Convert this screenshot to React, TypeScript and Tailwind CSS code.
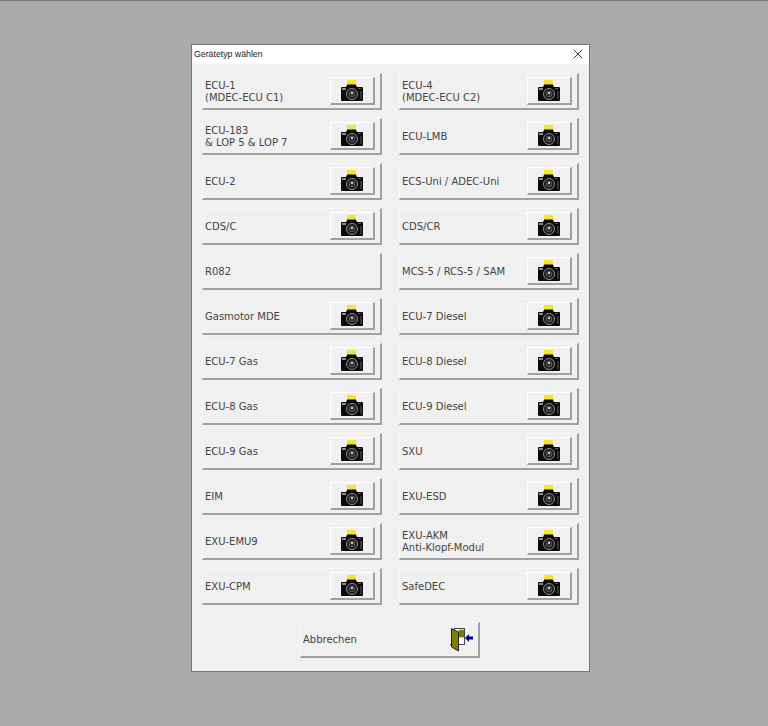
import { X } from "lucide-react"

type Device = { label: string[]; camera?: boolean }

const devices: Device[][] = [
  [{ label: ["ECU-1", "(MDEC-ECU C1)"] }, { label: ["ECU-4", "(MDEC-ECU C2)"] }],
  [{ label: ["ECU-183", "& LOP 5 & LOP 7"] }, { label: ["ECU-LMB"] }],
  [{ label: ["ECU-2"] }, { label: ["ECS-Uni / ADEC-Uni"] }],
  [{ label: ["CDS/C"] }, { label: ["CDS/CR"] }],
  [{ label: ["R082"], camera: false }, { label: ["MCS-5 / RCS-5 / SAM"] }],
  [{ label: ["Gasmotor MDE"] }, { label: ["ECU-7 Diesel"] }],
  [{ label: ["ECU-7 Gas"] }, { label: ["ECU-8 Diesel"] }],
  [{ label: ["ECU-8 Gas"] }, { label: ["ECU-9 Diesel"] }],
  [{ label: ["ECU-9 Gas"] }, { label: ["SXU"] }],
  [{ label: ["EIM"] }, { label: ["EXU-ESD"] }],
  [{ label: ["EXU-EMU9"] }, { label: ["EXU-AKM", "Anti-Klopf-Modul"] }],
  [{ label: ["EXU-CPM"] }, { label: ["SafeDEC"] }],
]

function CameraIcon() {
  return (
    <svg width="22" height="21" viewBox="0 0 22 21" className="shrink-0">
      {/* flash */}
      <rect x="6" y="0" width="9" height="5" fill="#f4e62c" />
      <rect x="6" y="4" width="9" height="2" fill="#7a7440" />
      {/* body */}
      <path d="M1 7 H5 L6 5 H15 L16 7 H21 Q22 7 22 8 V20 Q22 21 21 21 H1 Q0 21 0 20 V8 Q0 7 1 7 Z" fill="#0a0a0a" />
      <rect x="1" y="8" width="4" height="2" fill="#8c8c8c" />
      <rect x="17" y="8" width="3" height="1" fill="#5a5a5a" />
      <rect x="19" y="11" width="2" height="8" fill="#333" />
      {/* lens */}
      <circle cx="11" cy="14" r="5.5" fill="#161616" stroke="#8e8e8e" strokeWidth="1" />
      <circle cx="11" cy="14" r="3" fill="#333" stroke="#666" strokeWidth="0.8" />
      <rect x="10" y="12" width="2" height="2" fill="#c8c8c8" />
    </svg>
  )
}

function DoorIcon() {
  return (
    <svg width="23" height="24" viewBox="0 0 23 24" className="shrink-0">
      {/* floor line */}
      <path d="M0 16.5h15" stroke="#222" strokeWidth="1" />
      {/* frame with opening */}
      <rect x="4.5" y="0.5" width="10" height="16" fill="#fff" stroke="#444" strokeWidth="1" />
      <rect x="9" y="2" width="5" height="7" fill="#808000" stroke="#555" strokeWidth="0.5" />
      {/* door leaf */}
      <path d="M1.5 0.5 L8.5 4 V23 L1.5 19 Z" fill="#808000" stroke="#222" strokeWidth="1" />
      {/* arrow */}
      <path d="M15 10 L19 6 V8.5 H23 V11.5 H19 V14 Z" fill="#000090" />
    </svg>
  )
}

function DeviceButton({ device }: { device: Device }) {
  return (
    <div className="flex h-[37px] w-[180px] items-center justify-between border-t border-l border-t-[#f6f6f6] border-l-[#f6f6f6] border-r-2 border-b-2 border-r-[#a0a0a0] border-b-[#a0a0a0] bg-[#f0f0f0] pl-[2px] pr-[5px]">
      <span className="pt-[2px] text-[10px] leading-[12px] text-[#444]">
        {device.label.map((line) => (
          <span key={line} className="block whitespace-nowrap">
            {line}
          </span>
        ))}
      </span>
      {device.camera !== false && (
        <span className="flex h-[28px] w-[45px] items-center justify-center border-t border-l border-white border-r-2 border-b-2 border-r-[#a0a0a0] border-b-[#a0a0a0] bg-[#f0f0f0]">
          <CameraIcon />
        </span>
      )}
    </div>
  )
}

export default function App() {
  return (
    <div className="h-[726px] w-[768px] overflow-hidden border-t border-[#777] bg-[#aaaaaa] pt-[43px] pl-[191px] font-['DejaVu_Sans',sans-serif]">
      <div className="h-[628px] w-[399px] border border-[#777] bg-[#f0f0f0]">
        <div className="flex h-[19px] items-center justify-between bg-white pl-[2px] pr-[3px] font-['Liberation_Sans',sans-serif] text-[8.75px] text-[#222]">
          <span>Gerätetyp wählen</span>
          <X size={16} strokeWidth={1.5} className="mb-[1px] text-[#333]" />
        </div>
        <div className="flex flex-col gap-[8px] pt-[9px] pl-[10px]">
          {devices.map((row) => (
            <div key={row[0].label[0]} className="flex gap-[17px]">
              <DeviceButton device={row[0]} />
              <DeviceButton device={row[1]} />
            </div>
          ))}
        </div>
        <div className="mt-[17px] ml-[108px] flex h-[36px] w-[180px] items-center justify-between border-t border-l border-t-[#f6f6f6] border-l-[#f6f6f6] border-r-2 border-b-2 border-r-[#a0a0a0] border-b-[#a0a0a0] bg-[#f0f0f0] pl-[2px] pr-[5px]">
          <span className="text-[10px] text-[#444]">Abbrechen</span>
          <DoorIcon />
        </div>
      </div>
    </div>
  )
}
